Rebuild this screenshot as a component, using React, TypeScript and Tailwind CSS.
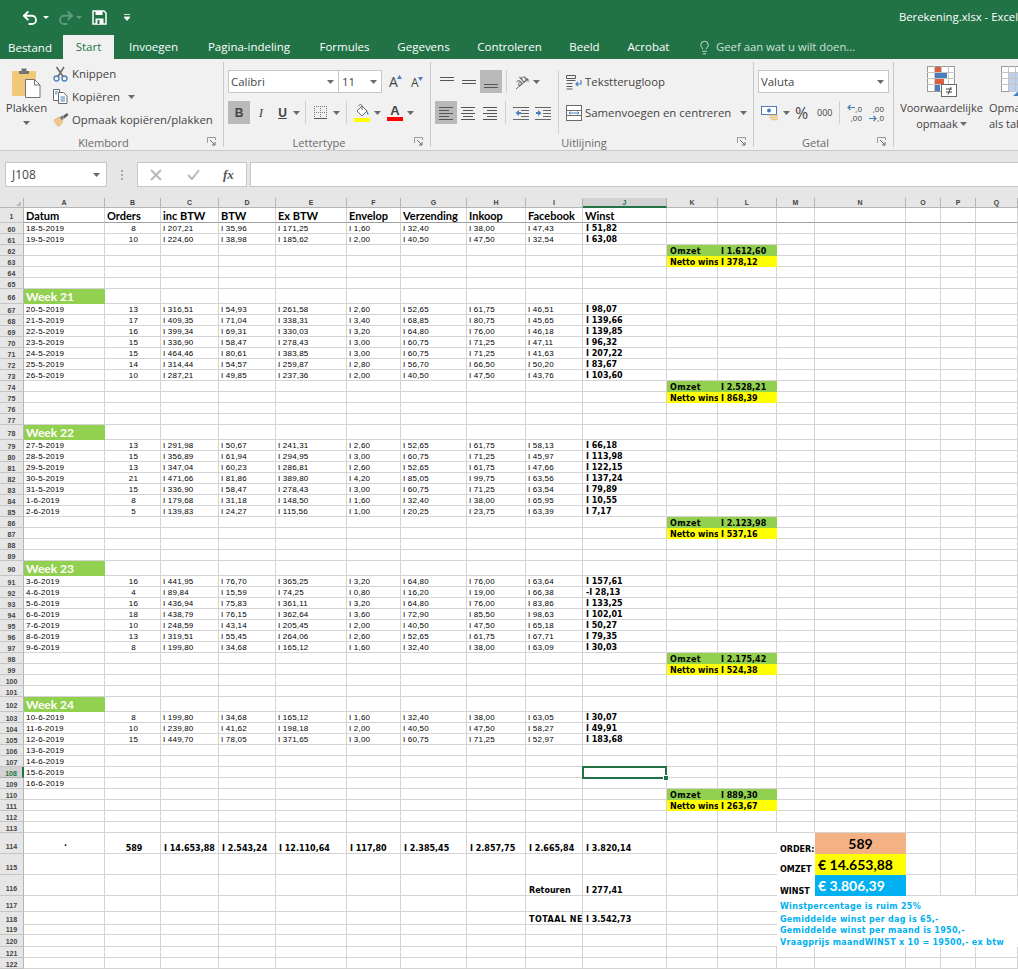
import type { ReactNode } from 'react';
import { Undo2, Redo2, Lightbulb } from 'lucide-react';

const COLS = ['A', 'B', 'C', 'D', 'E', 'F', 'G', 'H', 'I', 'J', 'K', 'L', 'M', 'N', 'O', 'P', 'Q'];

const GRID_COLS =
  'grid grid-cols-[24px_81px_56px_58px_57px_71px_54px_66px_59px_57px_84px_51px_59px_38px_91px_35px_35px_42px]';

const LINES = 'border-r border-b border-[#d4d4d4]';
const REG = "pl-[2px] pt-[2px] items-center [font-family:'Liberation_Sans',sans-serif] text-[8px] tracking-[0.2px] text-black";
const BOLD = "pl-[3px] pt-[2px] items-center [font-family:'DejaVu_Sans',sans-serif] font-bold text-[8px] text-black";
const BOTTOM = "pl-[3px] items-end [font-family:'DejaVu_Sans',sans-serif] font-bold text-[8px] text-black";
const HEAD = "pl-[2px] items-center [font-family:Lato,sans-serif] font-bold text-[11px] text-black border-r border-[#d4d4d4] border-b border-b-[#9e9e9e]";
const BLUE = "pl-[3px] items-center [font-family:'DejaVu_Sans',sans-serif] font-bold text-[8px] tracking-[0.3px] text-[#00b0f0]";

type Cell = { t?: ReactNode; c: string };
type RowData = { n: number; h: string; cells: Record<string, Cell>; skip?: string[] };

const h11 = 'h-[11px]';
const h15 = 'h-[15px]';

function dataRow(n: number, date: string, orders: string, vals: string[]): RowData {
  const letters = ['C', 'D', 'E', 'F', 'G', 'H', 'I'];
  const cells: Record<string, Cell> = {
    A: { t: date, c: `${REG} ${LINES}` },
    B: { t: orders, c: `${REG} justify-center ${LINES}` },
    J: { t: vals[7].startsWith('-') ? vals[7] : `I ${vals[7]}`, c: `${BOLD} ${LINES}` },
  };
  letters.forEach((l, i) => {
    cells[l] = { t: `I ${vals[i]}`, c: `${REG} ${LINES}` };
  });
  return { n, h: h11, cells };
}

function weekRow(n: number, label: string): RowData {
  return {
    n,
    h: h15,
    cells: {
      A: { t: label, c: "pl-[2px] items-center bg-[#92d050] [font-family:Lato,sans-serif] font-bold text-[12px] text-white" },
    },
  };
}

function omzetRow(n: number, val: string): RowData {
  return {
    n,
    h: h11,
    cells: {
      K: { t: 'Omzet', c: `${BOLD} bg-[#92d050] tracking-[0.4px]` },
      L: { t: `I ${val}`, c: `${BOLD} bg-[#92d050]` },
    },
  };
}

function nettoRow(n: number, val: string): RowData {
  return {
    n,
    h: h11,
    cells: {
      K: { t: 'Netto wins', c: `${BOLD} bg-[#ffff00]` },
      L: { t: `I ${val}`, c: `${BOLD} bg-[#ffff00]` },
    },
  };
}

function emptyRows(from: number, to: number): RowData[] {
  const out: RowData[] = [];
  for (let n = from; n <= to; n++) out.push({ n, h: h11, cells: {} });
  return out;
}

function dateOnly(n: number, date: string): RowData {
  return { n, h: h11, cells: { A: { t: date, c: `${REG} ${LINES}` } } };
}

function noteRow(n: number, text: string, extra: Record<string, Cell> = {}): RowData {
  return {
    n,
    h: n === 117 ? 'h-[16px]' : n === 118 ? 'h-[11px]' : 'h-[12px]',
    skip: ['N', 'O', 'P', 'Q'],
    cells: {
      ...extra,
      L: { c: 'border-b border-[#d4d4d4]' },
      M: { t: text, c: `${BLUE} col-span-5 ${n === 117 ? 'pt-[6px]' : 'pt-[3px]'}` },
    },
  };
}

const ROWS: RowData[] = [
  {
    n: 1,
    h: 'h-[15px]',
    cells: {
      A: { t: 'Datum', c: HEAD },
      B: { t: 'Orders', c: HEAD },
      C: { t: 'inc BTW', c: HEAD },
      D: { t: 'BTW', c: HEAD },
      E: { t: 'Ex BTW', c: HEAD },
      F: { t: 'Envelop', c: HEAD },
      G: { t: 'Verzending', c: HEAD },
      H: { t: 'Inkoop', c: HEAD },
      I: { t: 'Facebook', c: HEAD },
      J: { t: 'Winst', c: HEAD },
      K: { c: HEAD },
      L: { c: HEAD },
      M: { c: HEAD },
      N: { c: HEAD },
      O: { c: HEAD },
      P: { c: HEAD },
      Q: { c: HEAD },
    },
  },
  dataRow(60, '18-5-2019', '8', ['207,21', '35,96', '171,25', '1,60', '32,40', '38,00', '47,43', '51,82']),
  dataRow(61, '19-5-2019', '10', ['224,60', '38,98', '185,62', '2,00', '40,50', '47,50', '32,54', '63,08']),
  omzetRow(62, '1.612,60'),
  nettoRow(63, '378,12'),
  ...emptyRows(64, 65),
  weekRow(66, 'Week 21'),
  dataRow(67, '20-5-2019', '13', ['316,51', '54,93', '261,58', '2,60', '52,65', '61,75', '46,51', '98,07']),
  dataRow(68, '21-5-2019', '17', ['409,35', '71,04', '338,31', '3,40', '68,85', '80,75', '45,65', '139,66']),
  dataRow(69, '22-5-2019', '16', ['399,34', '69,31', '330,03', '3,20', '64,80', '76,00', '46,18', '139,85']),
  dataRow(70, '23-5-2019', '15', ['336,90', '58,47', '278,43', '3,00', '60,75', '71,25', '47,11', '96,32']),
  dataRow(71, '24-5-2019', '15', ['464,46', '80,61', '383,85', '3,00', '60,75', '71,25', '41,63', '207,22']),
  dataRow(72, '25-5-2019', '14', ['314,44', '54,57', '259,87', '2,80', '56,70', '66,50', '50,20', '83,67']),
  dataRow(73, '26-5-2019', '10', ['287,21', '49,85', '237,36', '2,00', '40,50', '47,50', '43,76', '103,60']),
  omzetRow(74, '2.528,21'),
  nettoRow(75, '868,39'),
  ...emptyRows(76, 77),
  weekRow(78, 'Week 22'),
  dataRow(79, '27-5-2019', '13', ['291,98', '50,67', '241,31', '2,60', '52,65', '61,75', '58,13', '66,18']),
  dataRow(80, '28-5-2019', '15', ['356,89', '61,94', '294,95', '3,00', '60,75', '71,25', '45,97', '113,98']),
  dataRow(81, '29-5-2019', '13', ['347,04', '60,23', '286,81', '2,60', '52,65', '61,75', '47,66', '122,15']),
  dataRow(82, '30-5-2019', '21', ['471,66', '81,86', '389,80', '4,20', '85,05', '99,75', '63,56', '137,24']),
  dataRow(83, '31-5-2019', '15', ['336,90', '58,47', '278,43', '3,00', '60,75', '71,25', '63,54', '79,89']),
  dataRow(84, '1-6-2019', '8', ['179,68', '31,18', '148,50', '1,60', '32,40', '38,00', '65,95', '10,55']),
  dataRow(85, '2-6-2019', '5', ['139,83', '24,27', '115,56', '1,00', '20,25', '23,75', '63,39', '7,17']),
  omzetRow(86, '2.123,98'),
  nettoRow(87, '537,16'),
  ...emptyRows(88, 89),
  weekRow(90, 'Week 23'),
  dataRow(91, '3-6-2019', '16', ['441,95', '76,70', '365,25', '3,20', '64,80', '76,00', '63,64', '157,61']),
  dataRow(92, '4-6-2019', '4', ['89,84', '15,59', '74,25', '0,80', '16,20', '19,00', '66,38', '-I 28,13']),
  dataRow(93, '5-6-2019', '16', ['436,94', '75,83', '361,11', '3,20', '64,80', '76,00', '83,86', '133,25']),
  dataRow(94, '6-6-2019', '18', ['438,79', '76,15', '362,64', '3,60', '72,90', '85,50', '98,63', '102,01']),
  dataRow(95, '7-6-2019', '10', ['248,59', '43,14', '205,45', '2,00', '40,50', '47,50', '65,18', '50,27']),
  dataRow(96, '8-6-2019', '13', ['319,51', '55,45', '264,06', '2,60', '52,65', '61,75', '67,71', '79,35']),
  dataRow(97, '9-6-2019', '8', ['199,80', '34,68', '165,12', '1,60', '32,40', '38,00', '63,09', '30,03']),
  omzetRow(98, '2.175,42'),
  nettoRow(99, '524,38'),
  ...emptyRows(100, 101),
  weekRow(102, 'Week 24'),
  dataRow(103, '10-6-2019', '8', ['199,80', '34,68', '165,12', '1,60', '32,40', '38,00', '63,05', '30,07']),
  dataRow(104, '11-6-2019', '10', ['239,80', '41,62', '198,18', '2,00', '40,50', '47,50', '58,27', '49,91']),
  dataRow(105, '12-6-2019', '15', ['449,70', '78,05', '371,65', '3,00', '60,75', '71,25', '52,97', '183,68']),
  dateOnly(106, '13-6-2019'),
  dateOnly(107, '14-6-2019'),
  dateOnly(108, '15-6-2019'),
  dateOnly(109, '16-6-2019'),
  omzetRow(110, '889,30'),
  nettoRow(111, '263,67'),
  ...emptyRows(112, 113),
  {
    n: 114,
    h: 'h-[21px]',
    cells: {
      A: { t: '·', c: `${BOTTOM} pb-[3px] justify-center ${LINES}` },
      B: { t: '589', c: `${BOTTOM} justify-center ${LINES}` },
      C: { t: 'I 14.653,88', c: `${BOTTOM} ${LINES}` },
      D: { t: 'I 2.543,24', c: `${BOTTOM} ${LINES}` },
      E: { t: 'I 12.110,64', c: `${BOTTOM} ${LINES}` },
      F: { t: 'I 117,80', c: `${BOTTOM} ${LINES}` },
      G: { t: 'I 2.385,45', c: `${BOTTOM} ${LINES}` },
      H: { t: 'I 2.857,75', c: `${BOTTOM} ${LINES}` },
      I: { t: 'I 2.665,84', c: `${BOTTOM} ${LINES}` },
      J: { t: 'I 3.820,14', c: `${BOTTOM} ${LINES}` },
      L: { c: 'border-b border-[#d4d4d4]' },
      M: { t: 'ORDER:', c: BOTTOM },
      N: { t: '589', c: "bg-[#f4b183] items-center justify-center [font-family:Lato,sans-serif] font-bold text-[14px] text-black" },
    },
  },
  {
    n: 115,
    h: 'h-[21px]',
    cells: {
      L: { c: 'border-b border-[#d4d4d4]' },
      M: { t: 'OMZET', c: `${BOTTOM} pb-[1px]` },
      N: { t: '€ 14.653,88', c: "pl-[3px] bg-[#ffff00] items-center [font-family:Lato,sans-serif] font-bold text-[14px] text-black" },
    },
  },
  {
    n: 116,
    h: 'h-[21px]',
    cells: {
      I: { t: 'Retouren', c: `${BOTTOM} ${LINES}` },
      J: { t: 'I 277,41', c: `${BOTTOM} ${LINES}` },
      L: { c: 'border-b border-[#d4d4d4]' },
      M: { t: 'WINST', c: BOTTOM },
      N: { t: '€ 3.806,39', c: "pl-[3px] bg-[#00b0f0] items-center [font-family:Lato,sans-serif] font-bold text-[14px] text-white" },
    },
  },
  noteRow(117, 'Winstpercentage is ruim 25%'),
  noteRow(118, 'Gemiddelde winst per dag is 65,-', {
    I: { t: 'TOTAAL NET', c: `${BOLD} pt-[4px] tracking-[0.5px] ${LINES}` },
    J: { t: 'I 3.542,73', c: `${BOLD} pt-[4px] ${LINES}` },
  }),
  noteRow(119, 'Gemiddelde winst per maand is 1950,-'),
  noteRow(120, 'Vraagprijs maandWINST x 10 = 19500,- ex btw'),
  ...emptyRows(121, 122),
];

function SheetRow({ row }: { row: RowData }) {
  const selected = row.n === 108;
  const tall = row.n >= 114 && row.n <= 116;
  return (
    <div className={`${GRID_COLS} ${row.h}`}>
      <div
        className={`flex items-center justify-center border-b [font-family:'Liberation_Sans',sans-serif] font-bold text-[7px] leading-none ${
          tall ? 'pt-[7px]' : row.n === 117 ? 'pt-[4px]' : 'pt-[2px]'
        } ${
          selected
            ? 'bg-[#d2d2d2] border-[#b0b0b0] border-r-2 border-r-[#217346] text-[#217346]'
            : 'bg-[#e6e6e6] border-[#c4c4c4] border-r border-r-[#b4b4b4] text-[#444444]'
        }`}
      >
        {row.n}
      </div>
      {COLS.filter((l) => !row.skip?.includes(l)).map((l) => {
        const cell = row.cells[l];
        const isActive = selected && l === 'J';
        return (
          <div
            key={l}
            className={`flex whitespace-nowrap leading-none ${cell ? cell.c : LINES} ${
              isActive ? 'relative z-10' : 'overflow-x-clip'
            }`}
          >
            {cell?.t}
            {isActive && (
              <div className="absolute -left-px -top-px -right-px -bottom-[2px] border-2 border-[#217346]">
                <div className="absolute -right-[4px] -bottom-[4px] w-[6px] h-[6px] bg-[#217346] border border-white" />
              </div>
            )}
          </div>
        );
      })}
    </div>
  );
}

function ColumnHeaders() {
  return (
    <div className={`${GRID_COLS} h-[10px]`}>
      <div className="flex items-end justify-end pr-[2px] pb-[1px] bg-[#e6e6e6] border-r border-b border-[#b4b4b4]">
        <div className="w-0 h-0 border-l-[5px] border-l-transparent border-b-[5px] border-b-[#b8b8b8]" />
      </div>
      {COLS.map((l) => (
        <div
          key={l}
          className={`flex items-center justify-center border-r [font-family:'Liberation_Sans',sans-serif] font-bold text-[7px] leading-none ${
            l === 'J'
              ? 'bg-[#d2d2d2] border-[#b4b4b4] border-b-2 border-b-[#217346] text-[#217346]'
              : 'bg-[#e6e6e6] border-[#b4b4b4] border-b border-b-[#b4b4b4] text-[#444444]'
          }`}
        >
          {l}
        </div>
      ))}
    </div>
  );
}

function Caret() {
  return (
    <svg width="7" height="4" viewBox="0 0 7 4" className="shrink-0">
      <path d="M0 0h7L3.5 4z" fill="#6a6a6a" />
    </svg>
  );
}

function VSep() {
  return <div className="w-px h-[23px] bg-[#d0d0d0] shrink-0" />;
}

function Launcher() {
  return (
    <svg width="9" height="9" viewBox="0 0 9 9" className="shrink-0">
      <path d="M0.5 6V0.5H8.5V3" fill="none" stroke="#9a9a9a" />
      <path d="M3 3l5 5M5 8h3V5" fill="none" stroke="#6a6a6a" />
    </svg>
  );
}

function Group({ width, label, children }: { width: string; label: string; children: ReactNode }) {
  return (
    <div className={`${width} shrink-0 h-[85px] mt-[3px] flex flex-col border-r border-[#c8c8c8]`}>
      <div className="flex-1 min-h-0">{children}</div>
      <div className="h-[15px] flex items-center">
        <div className="flex-1 text-center text-[11px] leading-none text-[#6a6a6a] pt-[6px]">{label}</div>
        <div className="w-[16px] flex justify-start pt-[4px]">
          <Launcher />
        </div>
      </div>
    </div>
  );
}

function LinesIcon({ rows }: { rows: [number, number][] }) {
  return (
    <svg width="14" height="16" viewBox="0 0 14 16" className="shrink-0">
      {rows.map(([y, len], i) => (
        <path key={i} d={`M0 ${y + 0.5}H${len}`} stroke="#555555" strokeWidth="1" />
      ))}
    </svg>
  );
}

function CenterLines({ rows }: { rows: [number, number][] }) {
  return (
    <svg width="14" height="16" viewBox="0 0 14 16" className="shrink-0">
      {rows.map(([y, len], i) => (
        <path key={i} d={`M${7 - len / 2} ${y + 0.5}H${7 + len / 2}`} stroke="#555555" strokeWidth="1" />
      ))}
    </svg>
  );
}

function RightLines({ rows }: { rows: [number, number][] }) {
  return (
    <svg width="14" height="16" viewBox="0 0 14 16" className="shrink-0">
      {rows.map(([y, len], i) => (
        <path key={i} d={`M${14 - len} ${y + 0.5}H14`} stroke="#555555" strokeWidth="1" />
      ))}
    </svg>
  );
}

function ClipboardIcon() {
  return (
    <svg width="30" height="31" viewBox="0 0 30 31">
      <rect x="0" y="4" width="24" height="25" rx="1" fill="#f0c878" />
      <path d="M7 4h2.5V1.5h5V4H17v3H7z" fill="#737373" />
      <path d="M13.5 12.5h9l5.5 5.5v12.5h-14.500z" fill="#ffffff" stroke="#737373" />
      <path d="M22.500 12.500v5.500h5.500" fill="none" stroke="#737373" />
    </svg>
  );
}

function ScissorsIcon() {
  return (
    <svg width="15" height="16" viewBox="0 0 15 16">
      <circle cx="3.500" cy="12.500" r="2.500" fill="none" stroke="#4a7ebb" strokeWidth="1.300" />
      <circle cx="11.500" cy="12.500" r="2.500" fill="none" stroke="#4a7ebb" strokeWidth="1.300" />
      <path d="M5 10.500L11 1M10 10.500L3.500 1" stroke="#6a6a6a" strokeWidth="1.500" fill="none" />
    </svg>
  );
}

function CopyIcon() {
  return (
    <svg width="15" height="15" viewBox="0 0 15 15">
      <path d="M0.500 0.500h6v11h-6z" fill="#ffffff" stroke="#6a6a6a" />
      <path d="M5.500 3.500h5l3.500 3.500v7.500h-8.500z" fill="#ffffff" stroke="#6a6a6a" />
      <path d="M7.500 8h4.500M7.500 10h4.500M7.500 12h4.500M2 3h3M2 5h2" stroke="#4a7ebb" />
    </svg>
  );
}

function BrushIcon() {
  return (
    <svg width="16" height="15" viewBox="0 0 16 15">
      <path d="M1 8l5-3 4 5-4 4.500C4 14 2 11 1 8z" fill="#eec88a" stroke="#d9a75f" strokeWidth="0.500" />
      <path d="M6.500 5.500l3-2 1.500 2-1.500 3z" fill="#7a7a7a" />
      <path d="M10 4l4-3 1.500 2-4 3.500z" fill="#5e5e5e" />
    </svg>
  );
}

function SaveIcon() {
  return (
    <svg width="15" height="15" viewBox="0 0 15 15">
      <path d="M1 1h11l2 2v11H1z" fill="none" stroke="#ffffff" strokeWidth="1.500" />
      <path d="M3.500 1h7v4h-7z" fill="#ffffff" />
      <path d="M3.500 8.500h8V14h-8z" fill="#ffffff" />
      <path d="M5.500 10h2v4h-2z" fill="#217346" />
    </svg>
  );
}

function ClipboardGroup() {
  return (
    <div className="flex h-full">
      <div className="w-[53px] flex flex-col items-center pt-[5px] shrink-0">
        <ClipboardIcon />
        <div className="text-[11.4px] leading-none mt-[4px] text-[#444444]">Plakken</div>
        <div className="mt-[8px]">
          <Caret />
        </div>
      </div>
      <div className="flex flex-col text-[11.4px] text-[#444444] leading-none">
        <div className="h-[23px] flex items-center gap-[4px]">
          <ScissorsIcon />
          <span>Knippen</span>
        </div>
        <div className="h-[23px] flex items-center gap-[4px]">
          <CopyIcon />
          <span>Kopiëren</span>
          <span className="ml-[4px]">
            <Caret />
          </span>
        </div>
        <div className="h-[23px] flex items-center gap-[3px]">
          <BrushIcon />
          <span>Opmaak kopiëren/plakken</span>
        </div>
      </div>
    </div>
  );
}

function FontGroup() {
  return (
    <div className="flex flex-col pl-[4px] pt-[8px] text-[#444444]">
      <div className="flex items-center h-[23px]">
        <div className="w-[111px] h-[23px] bg-white border border-[#c6c6c6] flex items-center justify-between pl-[2px] pr-[4px] text-[11.4px]">
          <span>Calibri</span>
          <Caret />
        </div>
        <div className="w-[43px] h-[23px] bg-white border border-l-0 border-[#c6c6c6] flex items-center justify-between pl-[3px] pr-[4px] text-[11.4px]">
          <span>11</span>
          <Caret />
        </div>
        <div className="w-[14px] ml-[7px] flex items-start text-[14px] leading-none">
          <span>A</span>
          <svg width="5" height="4" viewBox="0 0 5 4" className="-ml-px">
            <path d="M0 4L2.500 0 5 4z" fill="#4a7ebb" />
          </svg>
        </div>
        <div className="w-[14px] ml-[8px] flex items-start text-[12px] leading-none pt-[2px]">
          <span>A</span>
          <svg width="5" height="4" viewBox="0 0 5 4" className="-ml-px">
            <path d="M0 0L2.500 4 5 0z" fill="#4a7ebb" />
          </svg>
        </div>
      </div>
      <div className="flex items-center h-[23px] mt-[8px]">
        <div className="w-[22px] h-[23px] bg-[#b9b9b9] flex items-center justify-center font-bold text-[12px] [font-family:'Liberation_Sans',sans-serif]">
          B
        </div>
        <div className="w-[22px] flex justify-center italic text-[13px] [font-family:'Liberation_Serif',serif]">I</div>
        <div className="w-[21px] flex justify-center underline font-bold text-[12px] [font-family:'Liberation_Sans',sans-serif]">
          U
        </div>
        <Caret />
        <div className="w-[5px]" />
        <VSep />
        <svg width="15" height="15" viewBox="0 0 15 15" className="ml-[7px]">
          <path d="M1 1.500h13M1 7.500h13M1 13.500h13M1.500 1v13M7.500 1v13M13.500 1v13" stroke="#7a7a7a" strokeDasharray="1 1" fill="none" />
          <path d="M1 13.500h13" stroke="#555555" />
        </svg>
        <span className="ml-[5px]">
          <Caret />
        </span>
        <div className="w-[6px]" />
        <VSep />
        <svg width="16" height="18" viewBox="0 0 16 18" className="ml-[7px]">
          <path d="M3 7l5-5 5 5-5 5z" fill="#ffffff" stroke="#6a6a6a" />
          <path d="M5 2c0-2 3-2 3 0v4" fill="none" stroke="#6a6a6a" />
          <path d="M13 7c1.500 1.500 2 3 1 4-1-1-1.500-2.500-1-4z" fill="#4a7ebb" />
          <rect x="0" y="14" width="16" height="4" fill="#ffff00" />
        </svg>
        <span className="ml-[4px]">
          <Caret />
        </span>
        <div className="w-[16px] ml-[6px] flex flex-col items-center">
          <span className="font-bold text-[13px] leading-[13px] [font-family:'Liberation_Sans',sans-serif]">A</span>
          <div className="w-[16px] h-[4px] bg-[#ff0000]" />
        </div>
        <span className="ml-[4px]">
          <Caret />
        </span>
      </div>
    </div>
  );
}

function AlignGroup() {
  return (
    <div className="flex h-full text-[#444444]">
      <div className="flex flex-col pl-[4px] pt-[8px] w-[127px] shrink-0">
        <div className="flex items-center h-[23px]">
          <div className="w-[22px] flex justify-center ml-[1px]">
            <LinesIcon rows={[[3, 14], [6, 14]]} />
          </div>
          <div className="w-[22px] flex justify-center">
            <LinesIcon rows={[[6, 14], [9, 14]]} />
          </div>
          <div className="w-[22px] h-[23px] bg-[#b9b9b9] flex items-center justify-center">
            <LinesIcon rows={[[10, 14], [13, 14]]} />
          </div>
          <div className="w-[4px]" />
          <VSep />
          <div className="ml-[7px] w-[16px] h-[16px] relative">
            <span className="absolute left-[1px] top-[1px] rotate-[-40deg] text-[10px] leading-none">ab</span>
            <svg width="16" height="16" viewBox="0 0 16 16" className="absolute left-0 top-0">
              <path d="M2 15L14 5M14 5h-3M14 5v3" fill="none" stroke="#666666" />
            </svg>
          </div>
          <span className="ml-[3px]">
            <Caret />
          </span>
        </div>
        <div className="flex items-center h-[23px] mt-[8px]">
          <div className="w-[22px] h-[23px] bg-[#b9b9b9] flex items-center justify-center">
            <LinesIcon rows={[[2, 14], [5, 10], [8, 14], [11, 10], [14, 14]]} />
          </div>
          <div className="w-[22px] flex justify-center">
            <CenterLines rows={[[2, 14], [5, 10], [8, 14], [11, 10], [14, 14]]} />
          </div>
          <div className="w-[22px] flex justify-center">
            <RightLines rows={[[2, 14], [5, 10], [8, 14], [11, 10], [14, 14]]} />
          </div>
          <div className="w-[4px]" />
          <VSep />
          <svg width="16" height="16" viewBox="0 0 16 16" className="ml-[7px]">
            <path d="M0 2.500h16M8 5.500h8M8 8.500h8M8 11.500h8M0 14.500h16" stroke="#666666" />
            <path d="M6 5L2.500 8 6 11V9h2V7H6z" fill="#4a7ebb" />
          </svg>
          <svg width="16" height="16" viewBox="0 0 16 16" className="ml-[6px]">
            <path d="M0 2.500h16M8 5.500h8M8 8.500h8M8 11.500h8M0 14.500h16" stroke="#666666" />
            <path d="M3 5l3.500 3L3 11V9H1V7h2z" fill="#4a7ebb" />
          </svg>
        </div>
      </div>
      <div className="w-px h-[64px] mt-[8px] bg-[#d0d0d0] shrink-0" />
      <div className="flex flex-col pl-[7px] pt-[8px] text-[11.4px] leading-none whitespace-nowrap">
        <div className="flex items-center h-[23px] gap-[3px]">
          <svg width="16" height="16" viewBox="0 0 16 16">
            <path d="M0.500 1.500h9v3h-9zM0.500 6.500h9M0.500 9.500h6M0.500 12.500h6M0.500 15h6" fill="none" stroke="#5a5a5a" />
            <path d="M15 6v4H10m2-2l-2 2 2 2" fill="none" stroke="#4a7ebb" strokeWidth="1.200" />
          </svg>
          <span>Tekstterugloop</span>
        </div>
        <div className="flex items-center h-[23px] mt-[8px] gap-[3px]">
          <svg width="16" height="16" viewBox="0 0 16 16">
            <rect x="0.500" y="0.500" width="15" height="15" fill="#ffffff" stroke="#6a6a6a" />
            <path d="M0 5.500h16M0 10.500h16" stroke="#6a6a6a" />
            <path d="M3 8h10M4.500 6.500L3 8l1.500 1.500M11.500 6.500L13 8l-1.500 1.500" fill="none" stroke="#4a7ebb" />
          </svg>
          <span>Samenvoegen en centreren</span>
          <span className="ml-[6px]">
            <Caret />
          </span>
        </div>
      </div>
    </div>
  );
}

function NumberGroup() {
  return (
    <div className="flex flex-col pl-[4px] pt-[8px] text-[#444444]">
      <div className="w-[131px] h-[23px] bg-white border border-[#c6c6c6] flex items-center justify-between pl-[2px] pr-[4px] text-[11.4px]">
        <span>Valuta</span>
        <Caret />
      </div>
      <div className="flex items-center h-[23px] mt-[8px]">
        <svg width="18" height="16" viewBox="0 0 18 16" className="ml-[3px]">
          <rect x="0.500" y="1.500" width="15" height="8" fill="#ffffff" stroke="#4a7ebb" />
          <circle cx="8" cy="5.500" r="2" fill="#4a7ebb" />
          <path d="M8 10.500h9M8 12.500h9M10 14.500h7" stroke="#eec88a" strokeWidth="1.500" />
        </svg>
        <span className="ml-[4px]">
          <Caret />
        </span>
        <span className="ml-[5px] w-[14px] text-[16px] leading-none">%</span>
        <span className="ml-[8px] w-[17px] text-[9px] leading-none">000</span>
        <div className="w-[5px]" />
        <VSep />
        <div className="ml-[7px] relative w-[15px] h-[18px] text-[8px] leading-[9px]">
          <div className="text-right">,0</div>
          <div className="text-right">,00</div>
          <svg width="8" height="7" viewBox="0 0 8 7" className="absolute left-0 top-0">
            <path d="M8 3.500H1M3.500 1L1 3.500 3.500 6" fill="none" stroke="#4a7ebb" strokeWidth="1.200" />
          </svg>
        </div>
        <div className="ml-[7px] relative w-[15px] h-[18px] text-[8px] leading-[9px]">
          <div className="text-right">,00</div>
          <div className="text-right">,0</div>
          <svg width="8" height="7" viewBox="0 0 8 7" className="absolute left-0 bottom-0">
            <path d="M0 3.500H7M4.500 1L7 3.500 4.500 6" fill="none" stroke="#4a7ebb" strokeWidth="1.200" />
          </svg>
        </div>
      </div>
    </div>
  );
}

function StylesGroup() {
  return (
    <div className="flex mt-[3px] text-[11px] leading-none text-[#444444] overflow-hidden flex-1 min-w-0 whitespace-nowrap">
      <div className="w-[95px] shrink-0 flex flex-col items-center pt-[4px]">
        <svg width="30" height="31" viewBox="0 0 30 31">
          <rect x="0.500" y="0.500" width="27" height="25" fill="#ffffff" stroke="#9a9a9a" />
          <path d="M0 6.500h28M0 12.500h28M0 18.500h28M7.500 0v25M14.500 0v25M21.500 0v25" stroke="#c4c4c4" />
          <rect x="8" y="1" width="6" height="5" fill="#de5f40" />
          <rect x="8" y="7" width="12" height="5" fill="#4a7ebb" />
          <rect x="8" y="13" width="9" height="5" fill="#de5f40" />
          <rect x="8" y="19" width="5" height="6" fill="#4a7ebb" />
          <rect x="14.500" y="18.500" width="15" height="12" fill="#ffffff" stroke="#6a6a6a" />
          <path d="M19 23h6M19 26h6M24 21l-3 7.500" stroke="#444444" fill="none" />
        </svg>
        <div className="mt-[5px]">Voorwaardelijke</div>
        <div className="mt-[5px] flex items-center gap-[2px]">
          opmaak
          <Caret />
        </div>
      </div>
      <div className="shrink-0 flex flex-col items-start pt-[4px] w-[46px]">
        <svg width="30" height="31" viewBox="0 0 30 31" className="ml-[12px]">
          <rect x="0.500" y="0.500" width="29" height="25" fill="#ffffff" stroke="#9a9a9a" />
          <rect x="8" y="6" width="22" height="20" fill="#bdd2ea" />
          <path d="M0 6.500h30M0 12.500h30M0 18.500h30M7.500 0v25M14.500 0v25M21.500 0v25" stroke="#c4c4c4" />
          <path d="M12 30l10-9 8 0v9z" fill="#4a7ebb" />
        </svg>
        <div className="mt-[5px]">Opmaak</div>
        <div className="mt-[5px]">als tabel</div>
      </div>
    </div>
  );
}

const TABS: [string, string][] = [
  ['Invoegen', 'w-[79px]'],
  ['Pagina-indeling', 'w-[112px]'],
  ['Formules', 'w-[79px]'],
  ['Gegevens', 'w-[79px]'],
  ['Controleren', 'w-[93px]'],
  ['Beeld', 'w-[57px]'],
  ['Acrobat', 'w-[71px]'],
];

export default function App() {
  return (
    <div className="w-[1018px] h-[970px] overflow-hidden bg-white [font-family:'Open_Sans',sans-serif]">
      <div className="h-[35px] bg-[#217346] flex items-center text-white">
        <div className="ml-[21px] w-[18px]">
          <Undo2 size={18} strokeWidth={2.5} />
        </div>
        <svg width="6" height="3" viewBox="0 0 6 3" className="ml-[4px]">
          <path d="M0 0h6L3 3z" fill="#ffffff" />
        </svg>
        <div className="ml-[8px] w-[18px] text-[#5d9c7c]">
          <Redo2 size={18} strokeWidth={2.5} />
        </div>
        <svg width="6" height="3" viewBox="0 0 6 3" className="ml-[1px]">
          <path d="M0 0h6L3 3z" fill="#5d9c7c" />
        </svg>
        <div className="ml-[10px]">
          <SaveIcon />
        </div>
        <svg width="6" height="7" viewBox="0 0 6 7" className="ml-[17px]">
          <path d="M0 0.500h6M0 3h6L3 6.500z" stroke="#ffffff" strokeWidth="0.800" fill="#ffffff" />
        </svg>
        <div className="ml-auto text-[11.3px] whitespace-nowrap">Berekening.xlsx - Excel</div>
      </div>

      <div className="h-[24px] bg-[#217346] flex text-[11.5px] text-white whitespace-nowrap">
        <div className="w-[63px] pl-[8px] flex items-center pt-[1px]">Bestand</div>
        <div className="w-[51px] bg-[#f1f1f1] text-[#217346] flex items-center justify-center">Start</div>
        {TABS.map(([label, w]) => (
          <div key={label} className={`${w} flex items-center justify-center`}>
            {label}
          </div>
        ))}
        <div className="ml-[13px] flex items-center gap-[4px] text-[#cde0d6] text-[11.3px]">
          <Lightbulb size={15} strokeWidth={1.5} />
          <span>Geef aan wat u wilt doen...</span>
        </div>
      </div>

      <div className="h-[92px] bg-[#f1f1f1] flex border-b border-[#c8c8c8]">
        <Group width="w-[224px]" label="Klembord">
          <ClipboardGroup />
        </Group>
        <Group width="w-[207px]" label="Lettertype">
          <FontGroup />
        </Group>
        <Group width="w-[323px]" label="Uitlijning">
          <AlignGroup />
        </Group>
        <Group width="w-[140px]" label="Getal">
          <NumberGroup />
        </Group>
        <StylesGroup />
      </div>

      <div className="h-[47px] bg-[#e6e6e6] pt-[11px]">
        <div className="flex h-[25px] items-stretch">
          <div className="ml-[5px] w-[102px] bg-white border border-[#c6c6c6] flex items-center justify-between pl-[6px] pr-[6px] text-[12px] text-[#444444]">
            <span>J108</span>
            <Caret />
          </div>
          <div className="w-[30px] flex flex-col items-center justify-center gap-[2px]">
            <div className="w-[2px] h-[2px] bg-[#a8a8a8]" />
            <div className="w-[2px] h-[2px] bg-[#a8a8a8]" />
            <div className="w-[2px] h-[2px] bg-[#a8a8a8]" />
          </div>
          <div className="w-[110px] bg-white border border-[#c6c6c6] flex items-center">
            <svg width="12" height="12" viewBox="0 0 12 12" className="ml-[12px]">
              <path d="M1 1l10 10M11 1L1 11" stroke="#b8b8b8" strokeWidth="2" />
            </svg>
            <svg width="13" height="11" viewBox="0 0 13 11" className="ml-[25px]">
              <path d="M1 6l4 4 7-9" stroke="#b8b8b8" strokeWidth="2" fill="none" />
            </svg>
            <span className="ml-[23px] italic font-bold text-[13px] leading-none text-[#555555] [font-family:'Liberation_Serif',serif]">
              fx
            </span>
          </div>
          <div className="ml-[3px] flex-1 bg-white border border-r-0 border-[#c6c6c6]" />
        </div>
      </div>

      <ColumnHeaders />
      {ROWS.map((row) => (
        <SheetRow key={row.n} row={row} />
      ))}
    </div>
  );
}
